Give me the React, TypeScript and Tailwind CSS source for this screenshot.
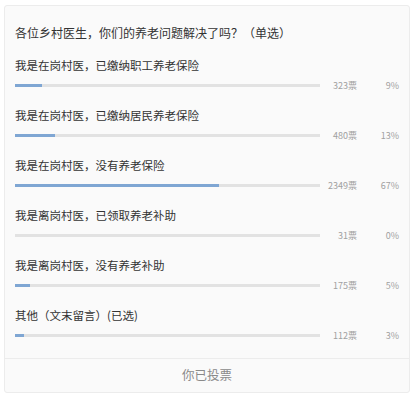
const options = [
  { label: '我是在岗村医，已缴纳职工养老保险', votes: 323, pct: 9 },
  { label: '我是在岗村医，已缴纳居民养老保险', votes: 480, pct: 13 },
  { label: '我是在岗村医，没有养老保险', votes: 2349, pct: 67 },
  { label: '我是离岗村医，已领取养老补助', votes: 31, pct: 0 },
  { label: '我是离岗村医，没有养老补助', votes: 175, pct: 5 },
  { label: '其他（文末留言）(已选)', votes: 112, pct: 3 },
]

const font = { fontFamily: '"Noto Sans CJK SC", "Liberation Sans", sans-serif' }

export default function App() {
  return (
    <div className="w-[414px] h-[400px] bg-white pt-[5px] pl-[4px]" style={font}>
      <div className="w-[406px] bg-[#fafafa] border border-[#ececec] rounded-[3px]">
        <div className="pt-[17px] px-[10px]">
          <p className="text-[12px] leading-[20px] text-[#333]">
            各位乡村医生，你们的养老问题解决了吗？（单选）
          </p>
          <div className="mt-[12px]">
            {options.map((o) => (
              <div key={o.label} className="h-[50px]">
                <p className="text-[11.5px] leading-[20px] text-[#333]">{o.label}</p>
                <div className="mt-[4px] h-[13px] flex items-center">
                  <div className="w-[305px] h-[3px] bg-[#e2e2e2]">
                    <div className="h-full bg-[#7fa6d3]" style={{ width: `${o.pct}%` }} />
                  </div>
                  <span className="w-[37px] text-right text-[9px] text-[#a0a0a0]">{o.votes}票</span>
                  <span className="w-[42px] text-right text-[9px] text-[#a0a0a0]">{o.pct}%</span>
                </div>
              </div>
            ))}
          </div>
        </div>
        <div className="mt-[3px] border-t border-[#ececec] h-[34px] flex items-center justify-center">
          <span className="text-[12.5px] text-[#8a8a8a]">你已投票</span>
        </div>
      </div>
    </div>
  )
}
